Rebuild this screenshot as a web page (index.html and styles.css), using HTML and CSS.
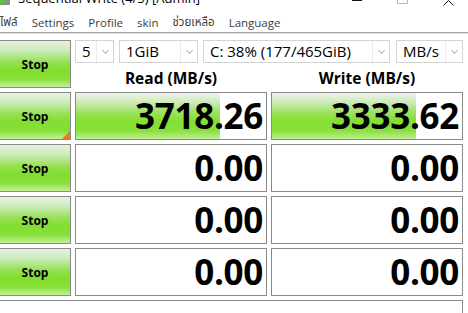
FILE: index.html
```html
<!DOCTYPE html>
<html lang="th">
<head>
<meta charset="utf-8">
<title>CrystalDiskMark</title>
<link rel="stylesheet" href="styles.css">
</head>
<body>
<div class="titlebar">
  <div class="app-icon"><span class="app-icon-green"></span></div>
  <div class="title-text">Sequential Write (4/5) [Admin]</div>
  <div class="win-controls">
    <span class="ctl ctl-min"></span>
    <span class="ctl ctl-max"></span>
    <svg class="ctl ctl-close" width="11" height="6" viewBox="0 0 11 6"><path d="M0.5 5.5 L5.5 0.5 L10.5 5.5" fill="none" stroke="#111" stroke-width="1"/></svg>
  </div>
</div>
<nav class="menubar">
  <span class="menu-item thai">ไฟล์</span>
  <span class="menu-item">Settings</span>
  <span class="menu-item">Profile</span>
  <span class="menu-item">skin</span>
  <span class="menu-item thai">ช่วยเหลือ</span>
  <span class="menu-item">Language</span>
</nav>
<main class="grid">
  <button class="stop">Stop</button>
  <div class="controls">
    <div class="selects">
      <div class="select sel-count"><span class="sel-text">5</span><span class="chev"></span></div>
      <div class="select sel-size"><span class="sel-text">1GiB</span><span class="chev"></span></div>
      <div class="select sel-drive"><span class="sel-text">C: 38% (177/465GiB)</span><span class="chev"></span></div>
      <div class="select sel-unit"><span class="sel-text">MB/s</span><span class="chev"></span></div>
    </div>
    <div class="headers">
      <div class="head">Read (MB/s)</div>
      <div class="head">Write (MB/s)</div>
    </div>
  </div>

  <button class="stop active">Stop<span class="corner"></span></button>
  <div class="meter"><div class="fill" style="width:76%"></div><span class="val">3718.26</span></div>
  <div class="meter"><div class="fill" style="width:76%"></div><span class="val">3333.62</span></div>

  <button class="stop">Stop</button>
  <div class="meter"><span class="val">0.00</span></div>
  <div class="meter"><span class="val">0.00</span></div>

  <button class="stop">Stop</button>
  <div class="meter"><span class="val">0.00</span></div>
  <div class="meter"><span class="val">0.00</span></div>

  <button class="stop">Stop</button>
  <div class="meter"><span class="val">0.00</span></div>
  <div class="meter"><span class="val">0.00</span></div>

  <div class="comment"></div>
</main>
</body>
</html>
```
FILE: styles.css
```css
html, body {
  margin: 0;
  padding: 0;
  background: #ffffff;
  overflow: hidden;
}
body {
  width: 468px;
  height: 313px;
  font-family: "Open Sans", "Noto Sans", "Noto Sans Thai", "DejaVu Sans", sans-serif;
  color: #000;
}
.titlebar {
  height: 10px;
  overflow: hidden;
  display: flex;
  align-items: flex-start;
  position: relative;
}
.app-icon {
  width: 10px;
  height: 5px;
  background: #8a8f8a;
  display: flex;
}
.app-icon-green {
  width: 5px;
  height: 3px;
  background: #5cc23a;
}
.title-text {
  margin-left: 8px;
  margin-top: -10px;
  font-size: 13px;
  line-height: 16px;
  white-space: nowrap;
}
.win-controls {
  position: absolute;
  top: 0;
  left: 352px;
  display: flex;
  align-items: flex-start;
}
.ctl-min {
  width: 10px;
  height: 1px;
  background: #111;
}
.ctl-max {
  margin-left: 35px;
  width: 9px;
  height: 3px;
  border: 1px solid #b8b8b8;
  border-top: none;
}
.ctl-close {
  margin-left: 35px;
  display: block;
}
.menubar {
  height: 20px;
  margin-top: 2px;
  display: flex;
  gap: 14px;
  align-items: center;
  font-size: 11.5px;
  color: #3c3c3c;
  border-bottom: 1px solid #a6a6a6;
  box-shadow: 0 1px 0 #dcdcdc;
}
.menu-item {
  white-space: nowrap;
}
.menu-item.thai {
  font-size: 11.5px;
}
.grid {
  margin-top: 7px;
  margin-left: -1px;
  display: grid;
  grid-template-columns: 72px 192px 192px;
  grid-auto-rows: 48px;
  column-gap: 4px;
  row-gap: 4px;
}
.stop {
  position: relative;
  margin: 0;
  padding: 0;
  border: 1px solid #8a8a8a;
  font-family: inherit;
  font-weight: 700;
  font-size: 12px;
  color: #000;
  background: linear-gradient(to bottom, #e8f1e6 0%, #c8eab4 22%, #98e156 45%, #82de30 62%, #86df36 82%, #c4f098 100%);
}
.corner {
  position: absolute;
  right: 0;
  bottom: 0;
  width: 0;
  height: 0;
  border-left: 8px solid transparent;
  border-bottom: 8px solid #f07818;
}
.controls {
  grid-column: 2 / 4;
  display: flex;
  flex-direction: column;
}
.selects {
  display: flex;
  height: 23px;
}
.select {
  box-sizing: border-box;
  height: 23px;
  border: 1px solid #d4d4d4;
  display: flex;
  align-items: center;
  position: relative;
  font-size: 15px;
}
.sel-text {
  box-sizing: border-box;
  height: 21px;
  line-height: 20px;
  padding-left: 6px;
  flex: 1;
  white-space: nowrap;
  border-right: 1px solid #ececec;
}
.chev {
  width: 16px;
  height: 21px;
  display: flex;
  align-items: center;
  justify-content: center;
}
.chev::before {
  content: "";
  width: 4px;
  height: 4px;
  border-right: 1px solid #b0b0b0;
  border-bottom: 1px solid #b0b0b0;
  transform: rotate(45deg);
  margin-top: -3px;
}
.sel-count { width: 39px; }
.sel-size { width: 79px; margin-left: 5px; }
.sel-drive { width: 187px; margin-left: 5px; }
.sel-unit { width: 67px; margin-left: 6px; }
.headers {
  flex: 1;
  display: grid;
  grid-template-columns: 192px 192px;
  column-gap: 4px;
  align-items: end;
}
.head {
  text-align: center;
  font-weight: 700;
  font-size: 15.5px;
  line-height: 20px;
  padding-bottom: 0px;
}
.meter {
  position: relative;
  box-sizing: border-box;
  border: 1px solid #8a8a8a;
  background: #fff;
  display: flex;
  align-items: center;
  justify-content: flex-end;
  overflow: hidden;
}
.fill {
  position: absolute;
  left: 0;
  top: 0;
  bottom: 0;
  background: linear-gradient(to bottom, #eef3ec 0%, #cdeab8 20%, #9ee260 42%, #84df32 60%, #88e03a 82%, #c2ef98 100%);
}
.val {
  position: relative;
  font-weight: 700;
  font-size: 35px;
  line-height: 46px;
  padding-right: 3px;
  letter-spacing: -0.3px;
}
.comment {
  grid-column: 1 / 4;
  border: 1px solid #8a8a8a;
  box-sizing: border-box;
}
```
